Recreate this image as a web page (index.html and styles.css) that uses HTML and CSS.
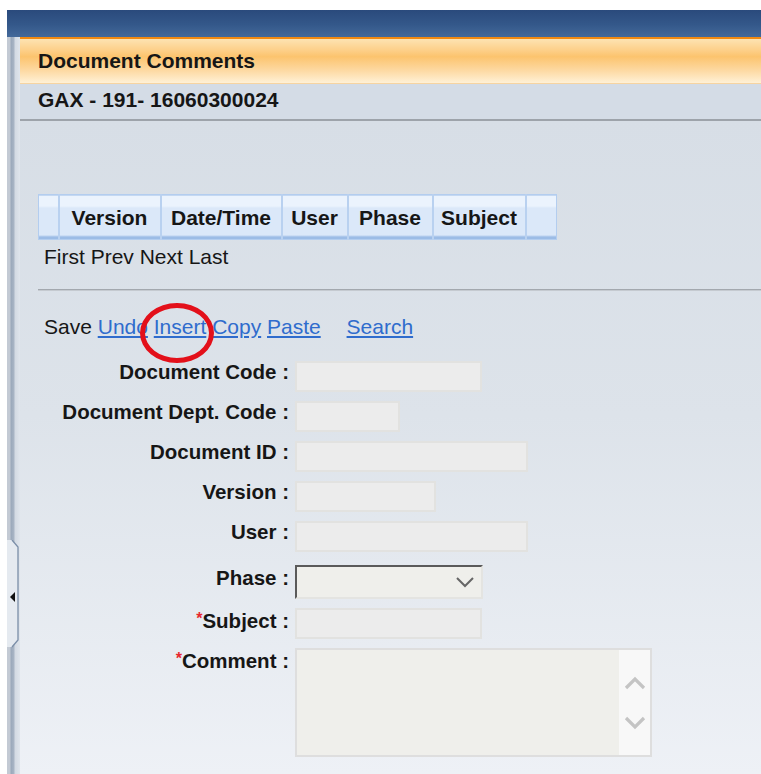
FILE: index.html
```html
<!DOCTYPE html>
<html lang="en">
<head>
<meta charset="utf-8">
<title>Document Comments</title>
<link rel="stylesheet" href="styles.css">
</head>
<body>
<div class="window">
  <div class="titlebar"></div>
  <div class="frame">
    <div class="side-strip">
      <svg class="side-tab" width="13" height="108" viewBox="0 0 13 108">
        <polygon points="0,0 5,0 11,7 11,100 5,107 0,107" fill="#e5eaf0"/>
        <polyline points="5,0 11,7 11,100 5,107" fill="none" stroke="#7b8ea8" stroke-width="1.3"/>
        <polygon points="3,57 8,52 8,62" fill="#111"/>
      </svg>
    </div>
    <div class="main">
      <div class="panel-header">Document Comments</div>
      <div class="panel-sub">GAX - 191- 16060300024</div>
      <div class="content">
        <table class="grid">
          <colgroup>
            <col class="c-sel">
            <col class="c-version">
            <col class="c-date">
            <col class="c-user">
            <col class="c-phase">
            <col class="c-subject">
            <col class="c-end">
          </colgroup>
          <thead>
            <tr>
              <th></th>
              <th>Version</th>
              <th>Date/Time</th>
              <th>User</th>
              <th>Phase</th>
              <th>Subject</th>
              <th></th>
            </tr>
          </thead>
        </table>
        <div class="pager">First Prev Next Last</div>
        <hr class="divider">
        <div class="actions">
          <span class="plain">Save</span>
          <a href="#" class="act">Undo</a>
          <a href="#" class="act">Insert</a>
          <a href="#" class="act">Copy</a>
          <a href="#" class="act">Paste</a>
          <a href="#" class="act search">Search</a>
          <span class="callout"></span>
        </div>
        <div class="form">
          <label class="lbl">Document Code :</label>
          <input class="field w186" type="text" disabled>

          <label class="lbl">Document Dept. Code :</label>
          <input class="field w104" type="text" disabled>

          <label class="lbl">Document ID :</label>
          <input class="field w232" type="text" disabled>

          <label class="lbl">Version :</label>
          <input class="field w140" type="text" disabled>

          <label class="lbl">User :</label>
          <input class="field w232" type="text" disabled>

          <label class="lbl phase-lbl">Phase :</label>
          <div class="select">
            <svg width="20" height="12" viewBox="0 0 20 12"><polyline points="2,2 10,10 18,2" fill="none" stroke="#666" stroke-width="2"/></svg>
          </div>

          <label class="lbl"><span class="req">*</span>Subject :</label>
          <input class="field w186" type="text" disabled>

          <label class="lbl"><span class="req">*</span>Comment :</label>
          <div class="memo">
            <textarea class="memo-text" disabled></textarea>
            <div class="memo-bar">
              <svg width="22" height="14" viewBox="0 0 22 14"><polyline points="2,12 11,3 20,12" fill="none" stroke="#c4c4c4" stroke-width="3.2"/></svg>
              <svg width="22" height="14" viewBox="0 0 22 14"><polyline points="2,2 11,11 20,2" fill="none" stroke="#c4c4c4" stroke-width="3.2"/></svg>
            </div>
          </div>
        </div>
      </div>
    </div>
  </div>
</div>
</body>
</html>
```
FILE: styles.css
```css
html, body {
  margin: 0;
  padding: 0;
  background: #fff;
  height: 774px;
  overflow: hidden;
}

body {
  font-family: "Liberation Sans", Arial, sans-serif;
  font-size: 21px;
  color: #161616;
}

.window {
  padding-top: 10px;
  padding-left: 7px;
}

.titlebar {
  height: 27px;
  background: linear-gradient(to bottom, #2a4a7c 0%, #34588a 55%, #44699a 100%);
}

.frame {
  display: flex;
  height: 737px;
}

/* collapsed navigation strip on the left */
.side-strip {
  position: relative;
  width: 13px;
  flex: none;
  background: linear-gradient(to right, #c3cad4 0px, #c3cad4 3px, #9aa8ba 4px, #a9b5c5 7px, #d3dae3 8px, #dfe5ec 13px);
}

.side-tab {
  position: absolute;
  left: 0;
  top: 503px;
  display: block;
}

.main {
  flex: 1;
  display: flex;
  flex-direction: column;
  min-width: 0;
}

.panel-header {
  border-top: 2px solid #f28a12;
  background: linear-gradient(to bottom, #fde3b2 0%, #fdd08a 25%, #fcc46e 40%, #fdd8a0 70%, #fff1d6 100%);
  border-bottom: 1px solid #f6d4a2;
  font-weight: bold;
  line-height: 44px;
  padding-left: 18px;
  box-sizing: border-box;
  height: 47px;
}

.panel-sub {
  height: 35px;
  background: #d4dce6;
  font-weight: bold;
  line-height: 32px;
  padding-left: 18px;
  border-bottom: 2px solid #9da3aa;
}

.content {
  flex: 1;
  background: linear-gradient(to bottom, #d7dee6 0%, #dde3ea 45%, #eef1f6 100%);
  padding-left: 18px;
  padding-top: 73px;
  position: relative;
}

/* result grid header */
.grid {
  border-collapse: collapse;
  border: 1px solid #b3cdef;
  table-layout: fixed;
  width: 518px;
}

.c-sel { width: 20px; }
.c-version { width: 102px; }
.c-date { width: 121px; }
.c-user { width: 66px; }
.c-phase { width: 85px; }
.c-subject { width: 93px; }
.c-end { width: 31px; }

.grid th {
  height: 45px;
  padding: 2px 0 0;
  font-weight: bold;
  text-align: center;
  white-space: nowrap;
  border-left: 2px solid #b9d1f0;
  background: linear-gradient(to bottom, #ebf3fd 0px, #ebf3fd 11px, #dbe8f9 12px, #dbe8f9 40px, #9cbce6 41px, #9cbce6 45px);
  box-sizing: border-box;
}

.grid th:first-child {
  border-left: none;
}

.pager {
  padding-left: 6px;
  margin-top: 5px;
  line-height: 24px;
}

.divider {
  margin: 20px 0 0 0;
  border: none;
  height: 2px;
  background: linear-gradient(to bottom, #a3a8ae 0, #a3a8ae 1px, #c5cad0 1px);
}

.actions {
  position: relative;
  margin-top: 24px;
  padding-left: 6px;
  line-height: 24px;
  white-space: nowrap;
}

.actions .act {
  color: #2f6ccd;
  text-decoration: underline;
  text-underline-offset: 2px;
}

.actions .search {
  margin-left: 20px;
}

/* hand-drawn highlight ring around the Insert action */
.callout {
  position: absolute;
  left: 102px;
  top: -12px;
  width: 64px;
  height: 50px;
  border: 5px solid #e3101a;
  border-radius: 50%;
}

.form {
  margin-top: 22px;
  display: grid;
  grid-template-columns: 269px auto;
  column-gap: 6px;
  row-gap: 9px;
  justify-items: start;
  margin-left: -18px;
}

.lbl {
  justify-self: end;
  font-weight: bold;
  line-height: 22px;
  white-space: nowrap;
  font-size: 20.5px;
}

.req {
  color: #e8282e;
  font-size: 16px;
  vertical-align: 4px;
}

.field {
  height: 31px;
  box-sizing: border-box;
  margin: 0;
  border: 2px solid #e2e2e0;
  background: #ececec;
  font: inherit;
}

.w186 { width: 187px; }
.w104 { width: 105px; }
.w232 { width: 233px; }
.w140 { width: 141px; }

.phase-lbl {
  margin-top: 6px;
}

.select {
  margin-top: 4px;
  width: 188px;
  height: 34px;
  box-sizing: border-box;
  border-top: 2px solid #5a5a5a;
  border-left: 2px solid #5a5a5a;
  border-right: 2px solid #e4e4e1;
  border-bottom: 2px solid #e4e4e1;
  background: #efefeb;
  display: flex;
  align-items: center;
  justify-content: flex-end;
  padding-right: 6px;
}

.select svg {
  display: block;
}

.memo {
  width: 357px;
  height: 109px;
  box-sizing: border-box;
  border: 2px solid #dedede;
  background: #efefeb;
  display: flex;
}

.memo-text {
  flex: 1;
  border: none;
  background: transparent;
  resize: none;
  margin: 0;
  padding: 0;
}

.memo-bar {
  width: 31px;
  background: #f8f8f8;
  display: flex;
  flex-direction: column;
  align-items: center;
  justify-content: center;
  gap: 26px;
}

.memo-bar svg {
  display: block;
}
```
